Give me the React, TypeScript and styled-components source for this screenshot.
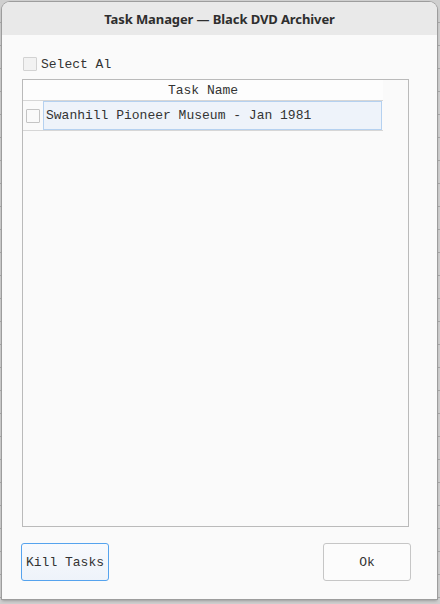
import React from "react";
import styled, { createGlobalStyle } from "styled-components";

const Global = createGlobalStyle`
  html, body { margin: 0; padding: 0; }
  body { width: 440px; height: 604px; overflow: hidden; }
`;

const Backdrop = styled.div`
  width: 440px;
  height: 604px;
  box-sizing: border-box;
  padding: 2px 3px 5px 2px;
  background:
    repeating-linear-gradient(180deg, transparent 0 22px, #a9a9a9 22px 23px),
    #cfcfcf;
  display: flex;
`;

const Dialog = styled.div`
  flex: 1;
  display: flex;
  flex-direction: column;
  background: #fafafa;
  border-radius: 8px 8px 0 0;
  box-shadow: 0 0 0 1px #9d9d9d, 0 2px 3px rgba(0, 0, 0, 0.25);
  overflow: hidden;
`;

const TitleBar = styled.div`
  height: 33px;
  flex: none;
  display: flex;
  align-items: center;
  justify-content: center;
  background: #e9e9e9;
  font-family: "Noto Sans", "Open Sans", sans-serif;
  font-weight: 700;
  font-size: 13px;
  color: #2e2e2e;
  letter-spacing: -0.1px;
`;

const Body = styled.div`
  flex: 1;
  display: flex;
  flex-direction: column;
  padding: 22px 28px 18px 20px;
  font-family: "Liberation Mono", "Courier New", monospace;
  font-size: 13px;
  color: #333;
`;

const CheckRow = styled.label`
  display: flex;
  align-items: center;
  gap: 4px;
  height: 14px;
  margin-left: 1px;
`;

const Box = styled.span<{ $dim?: boolean }>`
  width: 12px;
  height: 12px;
  box-sizing: content-box;
  border: 1px solid ${(p) => (p.$dim ? "#d2d2d2" : "#c4c4c4")};
  background: ${(p) => (p.$dim ? "#f2f2f2" : "#fafafa")};
  border-radius: 1px;
  flex: none;
`;

const Table = styled.div`
  margin-top: 8px;
  flex: 1;
  border: 1px solid #bababa;
  background: #fafafa;
  display: flex;
  flex-direction: column;
`;

const HeaderRow = styled.div`
  width: 360px;
  height: 20px;
  display: flex;
  align-items: center;
  justify-content: center;
  background: #fdfdfd;
  border-bottom: 1px solid #d6d6d6;
`;

const Row = styled.div`
  width: 360px;
  height: 29px;
  display: flex;
  align-items: center;
  border-bottom: 1px solid #d6d6d6;
`;

const RowCheck = styled.div`
  width: 17px;
  flex: none;
  display: flex;
  justify-content: flex-start;
  padding-left: 3px;
`;

const Cell = styled.div`
  flex: 1;
  align-self: stretch;
  display: flex;
  align-items: center;
  padding-left: 2px;
  background: #eef3fa;
  border: 1px solid #b5d1f0;
  margin-right: 1px;
`;

const Footer = styled.div`
  margin-top: 16px;
  display: flex;
  justify-content: space-between;
  margin-left: -1px;
  margin-right: -2px;
`;

const Button = styled.button<{ $focused?: boolean }>`
  width: 88px;
  height: 38px;
  font-family: "Liberation Mono", "Courier New", monospace;
  font-size: 13px;
  color: #333;
  padding: 1px 0 0;
  border-radius: 3px;
  border: 1px solid ${(p) => (p.$focused ? "#55a3ee" : "#c6c6c6")};
  background: ${(p) =>
    p.$focused ? "linear-gradient(#f8fafd, #eef3fa)" : "#fcfcfc"};
`;

export default function App() {
  return (
    <>
      <Global />
      <Backdrop>
        <Dialog>
          <TitleBar>Task Manager — Black DVD Archiver</TitleBar>
          <Body>
            <CheckRow>
              <Box $dim />
              <span>Select Al</span>
            </CheckRow>
            <Table>
              <HeaderRow>Task Name</HeaderRow>
              <Row>
                <RowCheck>
                  <Box />
                </RowCheck>
                <Cell>Swanhill Pioneer Museum - Jan 1981</Cell>
              </Row>
            </Table>
            <Footer>
              <Button $focused>Kill Tasks</Button>
              <Button>Ok</Button>
            </Footer>
          </Body>
        </Dialog>
      </Backdrop>
    </>
  );
}
